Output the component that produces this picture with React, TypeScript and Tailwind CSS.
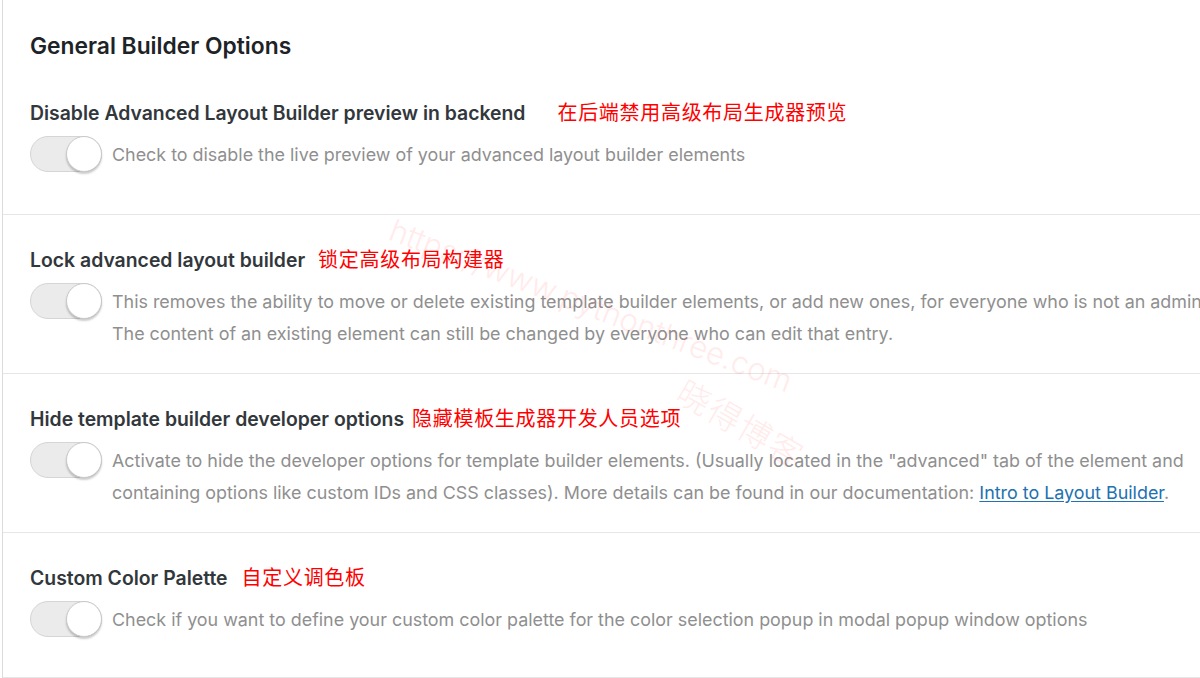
import React from 'react'

const font = { fontFamily: 'Inter, "Noto Sans CJK SC", sans-serif' }

function Toggle() {
  return (
    <div className="relative h-[36px] w-[72px] shrink-0 rounded-full border border-[#d5d5d5] bg-[#ebebeb]">
      <div className="absolute right-[-1px] top-[-1px] h-[36px] w-[36px] rounded-full border border-[#c9c9c9] bg-white shadow-[0_2px_2px_rgba(0,0,0,0.2)]" />
    </div>
  )
}

type Option = {
  title: string
  zh: string
  gap: string
  lines: React.ReactNode[]
}

const options: Option[] = [
  {
    title: 'Disable Advanced Layout Builder preview in backend',
    zh: '在后端禁用高级布局生成器预览',
    gap: 'ml-[32px]',
    lines: ['Check to disable the live preview of your advanced layout builder elements'],
  },
  {
    title: 'Lock advanced layout builder',
    zh: '锁定高级布局构建器',
    gap: 'ml-[13px]',
    lines: [
      'This removes the ability to move or delete existing template builder elements, or add new ones, for everyone who is not an admin.',
      'The content of an existing element can still be changed by everyone who can edit that entry.',
    ],
  },
  {
    title: 'Hide template builder developer options',
    zh: '隐藏模板生成器开发人员选项',
    gap: 'ml-[8px]',
    lines: [
      'Activate to hide the developer options for template builder elements. (Usually located in the "advanced" tab of the element and',
      <>
        containing options like custom IDs and CSS classes). More details can be found in our documentation:{' '}
        <a className="text-[#2271b1] underline underline-offset-2">Intro to Layout Builder</a>.
      </>,
    ],
  },
  {
    title: 'Custom Color Palette',
    zh: '自定义调色板',
    gap: 'ml-[14px]',
    lines: ['Check if you want to define your custom color palette for the color selection popup in modal popup window options'],
  },
]

function OptionRow({ opt, first, last }: { opt: Option; first: boolean; last: boolean }) {
  return (
    <section
      className={`border-b border-[#e6e6e6] pl-[27px] ${first ? 'pt-[41px]' : 'pt-[33px]'} ${last ? 'pb-[21px]' : 'pb-[23px]'}`}
    >
      <div className="flex h-[24px] items-center whitespace-nowrap">
        <h3 className="text-[19.4px] font-semibold leading-[24px] text-[#32373c]">{opt.title}</h3>
        <span className={`${opt.gap} text-[20px] leading-[24px] tracking-[0.7px] text-[#ff0000]`}>{opt.zh}</span>
      </div>
      <div className="mt-[11px] flex gap-[10px]">
        <Toggle />
        <p className="mt-[3px] min-h-[52px] whitespace-nowrap text-[17.9px] leading-[32px] text-[#8f8f8f]">
          {opt.lines.map((l, i) => (
            <span key={i} className="block">
              {l}
            </span>
          ))}
        </p>
      </div>
    </section>
  )
}

export default function App() {
  return (
    <div className="relative h-[678px] w-[1200px] overflow-hidden bg-white" style={font}>
      <div className="ml-[2px] h-full border-l border-[#dcdcdc]">
        <div className="pl-[27px] pt-[32px]">
          <h1 className="text-[22.8px] font-semibold leading-[28px] text-[#1d2327]">General Builder Options</h1>
        </div>
        {options.map((o, i) => (
          <OptionRow key={o.title} opt={o} first={i === 0} last={i === options.length - 1} />
        ))}
      </div>

      {/* watermark */}
      <div className="pointer-events-none absolute left-[398px] top-[210px] origin-top-left rotate-[21deg] whitespace-nowrap text-[31px] font-light leading-[40px] text-[#ff0000]/[0.08]">
        https://www.pythonthree.com
      </div>
      <div className="pointer-events-none absolute left-[690px] top-[372px] origin-top-left rotate-[30deg] whitespace-nowrap text-[33px] font-light leading-[40px] tracking-[2px] text-[#ff0000]/[0.08]">
        晓得博客
      </div>
    </div>
  )
}
